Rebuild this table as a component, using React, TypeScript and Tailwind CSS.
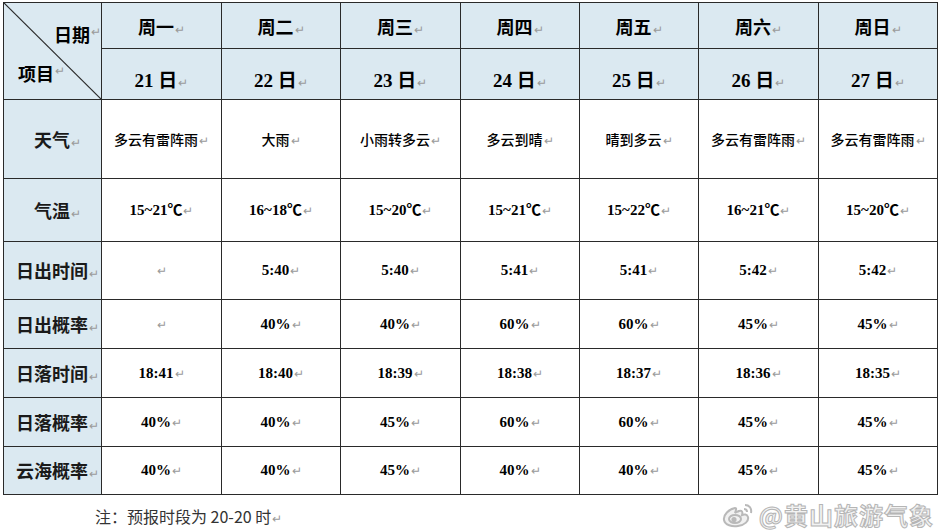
import React from "react";

const days = [
  { w: "周一", d: "21" },
  { w: "周二", d: "22" },
  { w: "周三", d: "23" },
  { w: "周四", d: "24" },
  { w: "周五", d: "25" },
  { w: "周六", d: "26" },
  { w: "周日", d: "27" },
];

const colWidths = [98, 120, 119, 120, 119, 119, 120, 119];

type Row = { label: string; h: string; values: string[]; kind: "cn" | "num" };

const rows: Row[] = [
  { label: "天气", h: "h-[79px]", kind: "cn", values: ["多云有雷阵雨", "大雨", "小雨转多云", "多云到晴", "晴到多云", "多云有雷阵雨", "多云有雷阵雨"] },
  { label: "气温", h: "h-[63px]", kind: "num", values: ["15~21℃", "16~18℃", "15~20℃", "15~21℃", "15~22℃", "16~21℃", "15~20℃"] },
  { label: "日出时间", h: "h-[58px]", kind: "num", values: ["", "5:40", "5:40", "5:41", "5:41", "5:42", "5:42"] },
  { label: "日出概率", h: "h-[49px]", kind: "num", values: ["", "40%", "40%", "60%", "60%", "45%", "45%"] },
  { label: "日落时间", h: "h-[49px]", kind: "num", values: ["18:41", "18:40", "18:39", "18:38", "18:37", "18:36", "18:35"] },
  { label: "日落概率", h: "h-[49px]", kind: "num", values: ["40%", "40%", "45%", "60%", "60%", "45%", "45%"] },
  { label: "云海概率", h: "h-[48px]", kind: "num", values: ["40%", "40%", "45%", "40%", "40%", "45%", "45%"] },
];

const serif = "font-['Liberation_Serif','Noto_Sans_CJK_SC',serif]";
const sans = "font-['Noto_Sans_CJK_SC',sans-serif]";

function Mark() {
  return <span className="ml-[1px] text-[12px] font-normal text-[#9a9a9a]">↵</span>;
}

function WeiboLogo() {
  return (
    <svg width="34" height="28" viewBox="0 0 34 28" fill="none" stroke="#b9b9b9" strokeWidth="2">
      <path d="M14 7c-6 1-12 7-11 12 1 5 8 7 14 6 7-1 11-5 10-9-1-3-4-3-6-2 1-3 0-5-3-4-2 1-3 1-4 2 1-3 2-5 0-5z" fill="#f1f1f1" />
      <ellipse cx="14" cy="18" rx="6" ry="4" />
      <circle cx="13" cy="18.5" r="1.6" fill="#b9b9b9" />
      <path d="M24 4c4 0 7 3 6 8" />
      <path d="M23 8c2 0 3 1 3 3" />
    </svg>
  );
}

export default function App() {
  return (
    <div className="w-[940px] h-[532px] bg-white overflow-hidden">
      <div className="pt-[2px] pl-[3px]">
        <table className="table-fixed border-collapse w-[934px] text-black">
          <colgroup>
            {colWidths.map((w, i) => (
              <col key={i} style={{ width: w }} />
            ))}
          </colgroup>
          <tbody>
            <tr className="h-[46px]">
              <td rowSpan={2} className="relative border-[1.5px] border-[#2a2a2a] bg-[#dbe9f1] p-0">
                <svg className="absolute inset-0 h-full w-full" viewBox="0 0 98 96" preserveAspectRatio="none">
                  <line x1="0" y1="0" x2="98" y2="96" stroke="#2a2a2a" strokeWidth="1.2" />
                </svg>
                <div className={`relative flex h-[96px] flex-col ${serif} text-[18px] font-bold`}>
                  <div className="flex justify-end pt-[20px]">
                    日期<Mark />
                  </div>
                  <div className="flex pl-[14px] pt-[12px]">
                    项目<Mark />
                  </div>
                </div>
              </td>
              {days.map((d) => (
                <td key={d.w} className={`border-[1.5px] border-[#2a2a2a] bg-[#dbe9f1] text-center align-middle ${serif} text-[18px] font-bold pt-[6px]`}>
                  {d.w}
                  <Mark />
                </td>
              ))}
            </tr>
            <tr className="h-[50px]">
              {days.map((d) => (
                <td key={d.d} className={`border-[1.5px] border-[#2a2a2a] bg-[#dbe9f1] text-center align-middle ${serif} text-[19px] font-bold pt-[14px]`}>
                  {d.d} 日
                  <Mark />
                </td>
              ))}
            </tr>
            {rows.map((r) => (
              <tr key={r.label} className={r.h}>
                <td className={`border-[1.5px] border-[#2a2a2a] bg-[#dbe9f1] text-center align-middle ${sans} text-[18px] font-bold text-[#1a1a1a] pl-[10px] whitespace-nowrap`}>
                  {r.label}
                  <Mark />
                </td>
                {r.values.map((v, i) => (
                  <td
                    key={i}
                    className={`border-[1.5px] border-[#2a2a2a] bg-white text-center align-middle whitespace-nowrap ${
                      r.kind === "cn" ? `${sans} text-[14px] font-medium` : `${serif} text-[15px] font-bold`
                    }`}
                  >
                    {v}
                    <Mark />
                  </td>
                ))}
              </tr>
            ))}
          </tbody>
        </table>
      </div>
      <div className="flex items-center justify-between pl-[95px] pr-[6px] pt-[6px]">
        <div className={`${sans} text-[16px] leading-[20px] text-[#333] pt-[4px]`}>
          注：预报时段为 20-20 时<Mark />
        </div>
        <div className="flex items-center gap-[4px]">
          <WeiboLogo />
          <span className={`${sans} text-[24px] leading-[26px] font-bold text-[#f2f2f2] [-webkit-text-stroke:1px_#b5b5b5] tracking-[1px]`}>
            @黄山旅游气象
          </span>
        </div>
      </div>
    </div>
  );
}
